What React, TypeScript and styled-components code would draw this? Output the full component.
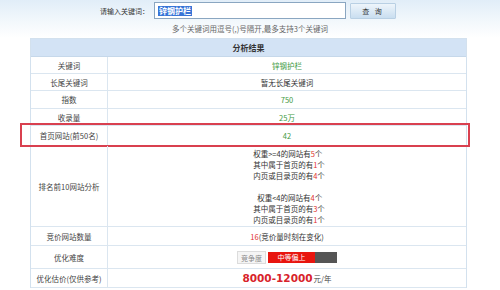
import React from 'react';
import styled, { createGlobalStyle } from 'styled-components';

const GlobalStyle = createGlobalStyle`
  * { box-sizing: border-box; }
  body {
    margin: 0;
    background: #fff;
    font-family: "Noto Sans CJK SC", "Noto Sans", sans-serif;
    color: #333;
  }
`;

const Page = styled.div`
  width: 500px;
  height: 290px;
  overflow: hidden;
  background: linear-gradient(180deg, #e1edf8 0px, #f3f8fc 22px, #ffffff 38px);
`;

const SearchBar = styled.div`
  display: flex;
  align-items: center;
  height: 19px;
  padding: 2px 0 0 100px;
`;

const SearchLabel = styled.span`
  font-size: 7px;
  width: 50px;
  color: #333;
  white-space: nowrap;
`;

const SearchInput = styled.div`
  width: 192px;
  height: 17px;
  margin-left: 4px;
  border: 1px solid #8aa6c1;
  background: #fff;
  display: flex;
  align-items: center;
  padding-left: 3px;
`;

const Selected = styled.span`
  background: #3875d7;
  color: #fff;
  font-size: 8px;
  font-weight: bold;
  line-height: 10px;
  padding: 0 1px;
`;

const SearchButton = styled.button`
  width: 46px;
  height: 16px;
  margin-left: 4px;
  margin-top: 1px;
  padding: 0;
  border: 1px solid #b9d0e4;
  border-radius: 1px;
  background: linear-gradient(180deg, #eef5fb, #c9def0);
  font-family: inherit;
  font-size: 7px;
  color: #333;
  letter-spacing: 2px;
`;

const Hint = styled.div`
  margin-top: 4px;
  height: 11px;
  line-height: 11px;
  text-align: center;
  font-size: 7.5px;
  color: #666;
`;

const Table = styled.div`
  margin: 4px 0 0 30px;
  width: 437px;
  border: 1px solid #d3e1ee;
  border-bottom: none;
  background: #fff;
`;

const TableHead = styled.div`
  height: 18px;
  line-height: 17px;
  background: #d3e3f5;
  border-bottom: 1px solid #c6d8ea;
  text-align: center;
  font-size: 8px;
  font-weight: bold;
  color: #333;
`;

const Row = styled.div<{ $h: number }>`
  position: relative;
  display: grid;
  grid-template-columns: 77px 1fr;
  height: ${p => p.$h}px;
  border-bottom: 1px solid #dbe6f0;
`;

const Label = styled.div`
  display: flex;
  align-items: center;
  justify-content: center;
  border-right: 1px solid #dbe6f0;
  font-size: 7.5px;
  color: #444;
  white-space: nowrap;
`;

const Value = styled.div<{ $tone?: 'green' | 'dark' }>`
  display: flex;
  align-items: center;
  justify-content: center;
  font-size: 7.5px;
  color: ${p => (p.$tone === 'green' ? '#3f9a3f' : '#333')};
  white-space: nowrap;
`;

const Red = styled.span`
  color: #e0302c;
`;

const Highlight = styled.div`
  position: absolute;
  left: -11px;
  right: -4px;
  top: -3px;
  bottom: -2px;
  border: 2px solid #d9404f;
  pointer-events: none;
`;

const Breakdown = styled.div`
  display: inline-block;
  text-align: left;
  font-size: 7.5px;
  line-height: 11px;
  color: #333;
  margin-left: 4px;
`;

const Line = styled.div<{ $indent?: number }>`
  height: 11px;
  padding-left: ${p => p.$indent || 0}px;
`;

const Meter = styled.div`
  display: flex;
  align-items: center;
`;

const MeterLabel = styled.span`
  height: 13px;
  line-height: 12px;
  padding: 0 3px;
  border: 1px solid #dcdcdc;
  background: #f5f5f5;
  color: #888;
  font-size: 7px;
  margin-right: 2px;
`;

const MeterTrack = styled.div`
  display: flex;
  width: 69px;
  height: 11px;
  background: #555;
`;

const MeterFill = styled.div`
  background: #e8150f;
  color: #fff;
  font-size: 7px;
  line-height: 11px;
  text-align: center;
`;

const Price = styled.span`
  font-family: "DejaVu Sans", Verdana, sans-serif;
  font-weight: bold;
  font-size: 10.5px;
  color: #d8232a;
`;

const Unit = styled.span`
  font-size: 7.5px;
  color: #444;
  margin-left: 1px;
`;

const breakdown = [
  { text: ['权重>=4的网站有', '5', '个'] },
  { text: ['其中属于首页的有', '1', '个'] },
  { text: ['内页或目录页的有', '4', '个'] },
  { text: null },
  { text: ['权重<4的网站有', '4', '个'], indent: 4 },
  { text: ['其中属于首页的有', '3', '个'] },
  { text: ['内页或目录页的有', '1', '个'] },
];

const App = () => {
  const level = 0.68;
  return (
    <Page>
      <GlobalStyle />
      <SearchBar>
        <SearchLabel>请输入关键词：</SearchLabel>
        <SearchInput>
          <Selected>锌钢护栏</Selected>
        </SearchInput>
        <SearchButton>查 询</SearchButton>
      </SearchBar>
      <Hint>多个关键词用逗号(,)号隔开,最多支持3个关键词</Hint>
      <Table>
        <TableHead>分析结果</TableHead>
        <Row $h={17}>
          <Label>关键词</Label>
          <Value $tone="green">锌钢护栏</Value>
        </Row>
        <Row $h={17}>
          <Label>长尾关键词</Label>
          <Value>暂无长尾关键词</Value>
        </Row>
        <Row $h={18}>
          <Label>指数</Label>
          <Value $tone="green">750</Value>
        </Row>
        <Row $h={17}>
          <Label>收录量</Label>
          <Value $tone="green">25万</Value>
        </Row>
        <Row $h={20}>
          <Label>首页网站(前50名)</Label>
          <Value $tone="green">42</Value>
          <Highlight />
        </Row>
        <Row $h={81}>
          <Label>排名前10网站分析</Label>
          <Value>
            <Breakdown>
              {breakdown.map((l, i) => (
                <Line key={i} $indent={l.indent}>
                  {l.text && (
                    <>
                      {l.text[0]}
                      <Red>{l.text[1]}</Red>
                      {l.text[2]}
                    </>
                  )}
                </Line>
              ))}
            </Breakdown>
          </Value>
        </Row>
        <Row $h={19}>
          <Label>竞价网站数量</Label>
          <Value>
            <Red>16</Red>(竞价量时刻在变化)
          </Value>
        </Row>
        <Row $h={23}>
          <Label>优化难度</Label>
          <Value>
            <Meter>
              <MeterLabel>竞争度</MeterLabel>
              <MeterTrack>
                <MeterFill style={{ width: `${level * 100}%` }}>中等偏上</MeterFill>
              </MeterTrack>
            </Meter>
          </Value>
        </Row>
        <Row $h={19}>
          <Label>优化估价(仅供参考)</Label>
          <Value>
            <Price>8000-12000</Price>
            <Unit>元/年</Unit>
          </Value>
        </Row>
      </Table>
    </Page>
  );
};

export default App;
